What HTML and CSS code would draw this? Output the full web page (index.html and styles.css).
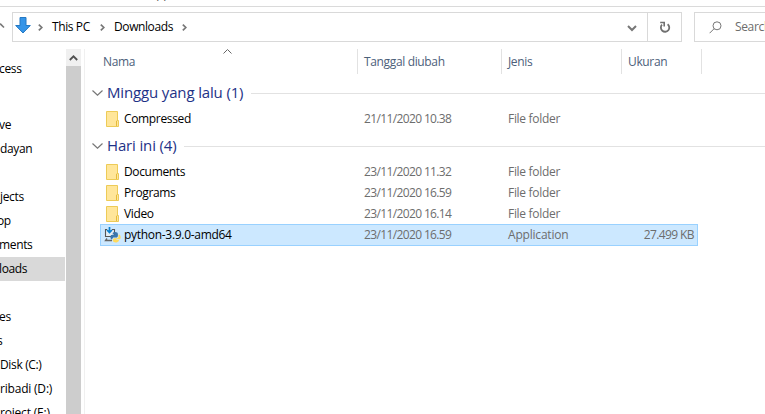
FILE: index.html
```html
<!DOCTYPE html>
<html lang="id">
<head>
<meta charset="utf-8">
<title>Downloads</title>
<link rel="stylesheet" href="styles.css">
</head>
<body>
<svg class="defs" width="0" height="0">
  <symbol id="folder" viewBox="0 0 13 16">
    <path d="M.5.5h11v9h1v6H.5z" fill="#ffe69a" stroke="#edcb57"/>
    <path d="M10.500 15V10l1-.5" fill="none" stroke="#e5bb3b"/>
  </symbol>
  <symbol id="chev" viewBox="0 0 11 6"><path d="M.5.5l5 4.700 5-4.700" fill="none" stroke="#777" stroke-width="1.200"/></symbol>
  <symbol id="next" viewBox="0 0 5 7"><path d="M.8.6l3 2.900-3 2.900" fill="none" stroke="#777" stroke-width="1.700"/></symbol>
</svg>
<div class="ribbon"><span class="ribbon-tab">App</span></div>
<div class="toolbar">
  <div class="up"><svg width="5" height="6" viewBox="0 0 5 6"><path d="M0 .5l4 4" fill="none" stroke="#777" stroke-width="1.600"/></svg></div>
  <div class="address">
    <svg class="arrow" width="16" height="17" viewBox="0 0 16 17"><path d="M5 .5h6v8h4.300L8 16 .7 8.500H5z" fill="#3595e8" stroke="#2479c4"/></svg>
    <svg class="sep s1" width="5" height="7"><use href="#next"/></svg>
    <span class="crumb c1">This PC</span>
    <svg class="sep s2" width="5" height="7"><use href="#next"/></svg>
    <span class="crumb c2">Downloads</span>
    <svg class="sep s3" width="5" height="7"><use href="#next"/></svg>
    <svg class="drop" width="10" height="7" viewBox="0 0 10 7"><path d="M1 1l4 4 4-4" fill="none" stroke="#777" stroke-width="2"/></svg>
    <div class="refresh"><svg width="12" height="13" viewBox="0 0 12 13"><path d="M8.600 3.200a4.200 4.200 0 1 1-5.600.5" fill="none" stroke="#707070" stroke-width="1.800"/><path d="M1.200 1.500h4v4" fill="none" stroke="#707070" stroke-width="1.600"/></svg></div>
  </div>
  <div class="search">
    <svg width="13" height="13" viewBox="0 0 13 13"><circle cx="8" cy="4.800" r="4" fill="none" stroke="#777"/><path d="M5.200 7.600L.6 12.200" stroke="#777" fill="none"/></svg>
    <span>Search</span>
  </div>
</div>
<div class="body">
  <nav class="tree">
    <div class="node first cut">cess</div>
    <div class="node cut">ve</div>
    <div class="node">dayan</div>
    <div class="node"></div>
    <div class="node">jects</div>
    <div class="node cut-more">op</div>
    <div class="node cut">ments</div>
    <div class="node selected cut">loads</div>
    <div class="node"></div>
    <div class="node cut">es</div>
    <div class="node cut-more">s</div>
    <div class="node">Disk (C:)</div>
    <div class="node spaced">ribadi (D:)</div>
    <div class="node spaced">roject (E:)</div>
  </nav>
  <div class="scrollbar"><div class="scroll-up"><svg width="9" height="6" viewBox="0 0 9 6"><path d="M.8 5l3.700-3.700L8.200 5" fill="none" stroke="#505050" stroke-width="1.800"/></svg></div></div>
  <main class="files">
    <div class="head">
      <div class="h name">Nama<svg class="sort" width="9" height="5" viewBox="0 0 9 5"><path d="M.5 4.500l4-4 4 4" fill="none" stroke="#666"/></svg></div>
      <div class="h date">Tanggal diubah</div>
      <div class="h type">Jenis</div>
      <div class="h size">Ukuran</div>
    </div>
    <div class="group"><svg width="11" height="6"><use href="#chev"/></svg><span class="g1">Minggu yang lalu (1)</span><i></i></div>
    <div class="row lone"><svg class="ico" width="13" height="16"><use href="#folder"/></svg><span class="fn">Compressed</span><span class="fd">21/11/2020 10.38</span><span class="ft">File folder</span><span class="fs"></span></div>
    <div class="group second"><svg width="11" height="6"><use href="#chev"/></svg><span class="g2">Hari ini (4)</span><i></i></div>
    <div class="row"><svg class="ico" width="13" height="16"><use href="#folder"/></svg><span class="fn">Documents</span><span class="fd">23/11/2020 11.32</span><span class="ft">File folder</span><span class="fs"></span></div>
    <div class="row"><svg class="ico" width="13" height="16"><use href="#folder"/></svg><span class="fn">Programs</span><span class="fd">23/11/2020 16.59</span><span class="ft">File folder</span><span class="fs"></span></div>
    <div class="row"><svg class="ico" width="13" height="16"><use href="#folder"/></svg><span class="fn">Video</span><span class="fd">23/11/2020 16.14</span><span class="ft">File folder</span><span class="fs"></span></div>
    <div class="row active">
      <svg class="ico app" width="17" height="16" viewBox="0 0 17 16">
        <path d="M3 2.500H1.500v7H10.500v-7H8" fill="#e3edf4" stroke="#555" stroke-width="1.100"/>
        <path d="M3 11.500L1.500 13.500H8" fill="none" stroke="#666" stroke-width="1.300"/>
        <path d="M5.500 0v5M3 3l2.500 2.500L8 3" fill="none" stroke="#087fce" stroke-width="1.700"/>
        <path d="M9 5.500q2.200-1.200 4.200 0 .7.500.7 1.500v2.300l-1 1.200H9.200L8 12.200H7Q5.600 10 7 8.100h3.500V7.500H8.500z" fill="#3b77ad"/>
        <path d="M14.500 7.800h1.300q1.500 2.300.3 4.500h-3.600v.7H15q.2 1.900-2.400 2.400-3.600.3-3.800-1.700v-1.300l1.200-1.200h3.300l1.200-1.300z" fill="#ffda5c"/>
      </svg>
      <span class="fn">python-3.9.0-amd64</span><span class="fd">23/11/2020 16.59</span><span class="ft">Application</span><span class="fs">27.499 KB</span></div>
  </main>
</div>
</body>
</html>
```
FILE: styles.css
```css
* { box-sizing: border-box; }
body {
  margin: 0;
  width: 765px;
  height: 414px;
  overflow: hidden;
  background: #fff;
  color: #000;
  font: 12px/20px "Open Sans", "Noto Sans", sans-serif;
  letter-spacing: -0.35px;
  white-space: nowrap;
}
svg { display: block; flex: none; }
.defs { position: absolute; }
.ribbon { height: 7px; border-bottom: 1px solid #dadada; overflow: hidden; }
.ribbon-tab { display: block; margin: -16px 0 0 149px; color: #555; }
.toolbar { display: flex; height: 42px; padding-top: 5px; overflow: hidden; }
.up { flex: none; width: 12px; padding-top: 11px; }
.address { display: flex; flex: none; align-items: center; width: 670px; height: 30px; border: 1px solid #d9d9d9; }
.arrow { margin: -3px 0 0 2px; }
.s1 { margin-left: 7px; }
.s2 { margin-left: 9px; }
.s3 { margin-left: 9px; }
.crumb { margin-left: 9px; letter-spacing: -0.4px; }
.c1 { width: 39px; }
.c2 { width: 59px; }
.drop { margin: 2px 0 0 auto; }
.refresh { display: flex; align-items: center; justify-content: center; width: 34px; height: 28px; margin-left: 10px; border-left: 1px solid #d9d9d9; }
.search { display: flex; flex: none; align-items: center; width: 90px; height: 30px; margin-left: 12px; padding-left: 14px; border: 1px solid #d9d9d9; color: #6d6d6d; }
.search svg { margin-right: 13px; }
.body { display: flex; height: 365px; }
.tree { width: 66px; padding-top: 8px; overflow: hidden; }
.node { height: 24px; width: 65px; line-height: 24px; }
.first { margin-bottom: 32px; }
.selected { background: #d9d9d9; }
.cut { text-indent: -1px; }
.cut-more { text-indent: -3px; }
.spaced { letter-spacing: -0.2px; }
.scrollbar { width: 15px; background: #cdcdcd; }
.scroll-up { display: flex; align-items: center; justify-content: center; height: 17px; background: #f0f0f0; }
.files { flex: 1; margin-left: 3px; border-left: 1px solid #f0f0f0; }
.head { display: flex; height: 33px; color: #4c607a; }
.h { height: 25px; padding-left: 6px; line-height: 25px; border-right: 1px solid #e2e2e2; }
.name { display: flex; width: 273px; padding-left: 18px; }
.sort { margin-left: 88px; }
.date { width: 144px; }
.type { width: 120px; }
.size { width: 80px; }
.group { display: flex; align-items: center; height: 22px; padding-left: 7px; color: #1e3287; font-size: 15px; letter-spacing: -0.15px; }
.group span { margin: -2px 0 0 4px; }
.group i { flex: 1; height: 1px; margin-left: 7px; background: #e2e2e2; }
.g1 { width: 137px; }
.g2 { width: 70px; }
.second { margin: 6px 0 4px; }
.row { display: flex; align-items: center; width: 598px; height: 21px; margin-left: 15px; padding-left: 6px; color: #6d6d6d; }
.lone { margin-top: 4px; }
.fn { width: 240px; margin-left: 5px; color: #000; }
.fd { width: 144px; letter-spacing: -0.63px; }
.ft { width: 120px; letter-spacing: -0.3px; }
.fs { width: 66px; text-align: right; letter-spacing: -0.6px; }
.active { height: 22px; padding-left: 3px; border: 1px solid #99d1ff; background: #cce8ff; }
.active .fn { letter-spacing: -0.3px; }
.active .ft { letter-spacing: -0.2px; }
.app { margin-right: -2px; }
```
